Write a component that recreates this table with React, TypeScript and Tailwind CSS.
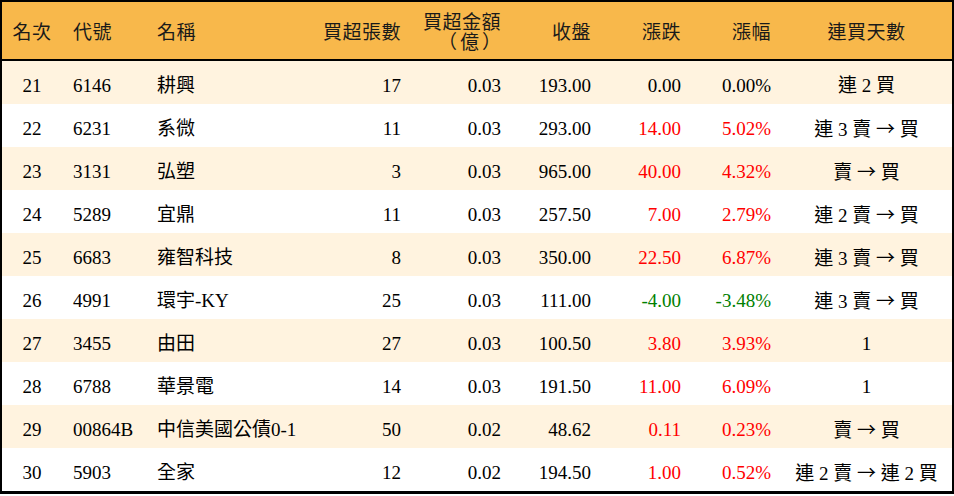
import React from 'react';

type Row = {
    rank: number;
    code: string;
    name: string;
    lots: number;
    amount: string;
    close: string;
    change: string;
    pct: string;
    streak: string;
};

const rows: Row[] = [
    { rank: 21, code: '6146', name: '耕興', lots: 17, amount: '0.03', close: '193.00', change: '0.00', pct: '0.00%', streak: '連 2 買' },
    { rank: 22, code: '6231', name: '系微', lots: 11, amount: '0.03', close: '293.00', change: '14.00', pct: '5.02%', streak: '連 3 賣 → 買' },
    { rank: 23, code: '3131', name: '弘塑', lots: 3, amount: '0.03', close: '965.00', change: '40.00', pct: '4.32%', streak: '賣 → 買' },
    { rank: 24, code: '5289', name: '宜鼎', lots: 11, amount: '0.03', close: '257.50', change: '7.00', pct: '2.79%', streak: '連 2 賣 → 買' },
    { rank: 25, code: '6683', name: '雍智科技', lots: 8, amount: '0.03', close: '350.00', change: '22.50', pct: '6.87%', streak: '連 3 賣 → 買' },
    { rank: 26, code: '4991', name: '環宇-KY', lots: 25, amount: '0.03', close: '111.00', change: '-4.00', pct: '-3.48%', streak: '連 3 賣 → 買' },
    { rank: 27, code: '3455', name: '由田', lots: 27, amount: '0.03', close: '100.50', change: '3.80', pct: '3.93%', streak: '1' },
    { rank: 28, code: '6788', name: '華景電', lots: 14, amount: '0.03', close: '191.50', change: '11.00', pct: '6.09%', streak: '1' },
    { rank: 29, code: '00864B', name: '中信美國公債0-1', lots: 50, amount: '0.02', close: '48.62', change: '0.11', pct: '0.23%', streak: '賣 → 買' },
    { rank: 30, code: '5903', name: '全家', lots: 12, amount: '0.02', close: '194.50', change: '1.00', pct: '0.52%', streak: '連 2 賣 → 連 2 買' },
];

const grid =
    'grid grid-cols-[60px_84px_165px_100px_100px_90px_90px_90px_171px]';

function tone(v: string): string {
    if (v.startsWith('-')) return 'text-[#008000]';
    if (parseFloat(v) === 0) return 'text-black';
    return 'text-[#ff0000]';
}

// the arrow is drawn long, as in a CJK font
function Streak({ text }: { text: string }) {
    const parts = text.split('→');
    return (
        <>
            {parts.map((p, i) => (
                <React.Fragment key={i}>
                    {i > 0 && (
                        <span style={{ fontFamily: '"Noto Sans CJK TC", sans-serif' }}>→</span>
                    )}
                    {p}
                </React.Fragment>
            ))}
        </>
    );
}

export default function App() {
    return (
        <div
            className="w-[954px] h-[496px] overflow-hidden bg-white text-black text-[19px] leading-none"
            style={{ fontFamily: '"Liberation Serif", "Noto Sans CJK TC", serif' }}
        >
            <div className="border-x-2 border-t-2 border-b-[3px] border-black">
                <div
                    className={`${grid} h-[59px] pt-[4px] items-center bg-[#f8b84b] border-b-2 border-black text-[#1a1a1a] tracking-[0.5px]`}
                >
                    <div className="text-center">名次</div>
                    <div className="pl-[11px]">代號</div>
                    <div className="pl-[11px]">名稱</div>
                    <div className="pr-[10px] text-right">買超張數</div>
                    <div className="pr-[10px] text-right leading-[20px]">
                        <div>買超金額</div>
                        <div className="tracking-[3px] -mr-[3px]">（億）</div>
                    </div>
                    <div className="pr-[10px] text-right">收盤</div>
                    <div className="pr-[10px] text-right">漲跌</div>
                    <div className="pr-[10px] text-right">漲幅</div>
                    <div className="text-center">連買天數</div>
                </div>

                {rows.map((r, i) => (
                    <div
                        key={r.rank}
                        className={`${grid} h-[43px] pt-[5px] items-center ${
                            i % 2 === 0 ? 'bg-[#fff3df]' : 'bg-white'
                        }`}
                    >
                        <div className="text-center">{r.rank}</div>
                        <div className="pl-[11px]">{r.code}</div>
                        <div className="pl-[11px] whitespace-nowrap">{r.name}</div>
                        <div className="pr-[10px] text-right">{r.lots}</div>
                        <div className="pr-[10px] text-right">{r.amount}</div>
                        <div className="pr-[10px] text-right">{r.close}</div>
                        <div className={`pr-[10px] text-right ${tone(r.change)}`}>
                            {r.change}
                        </div>
                        <div className={`pr-[10px] text-right ${tone(r.pct)}`}>
                            {r.pct}
                        </div>
                        <div className="text-center whitespace-pre">
                            <Streak text={r.streak} />
                        </div>
                    </div>
                ))}
            </div>
        </div>
    );
}
